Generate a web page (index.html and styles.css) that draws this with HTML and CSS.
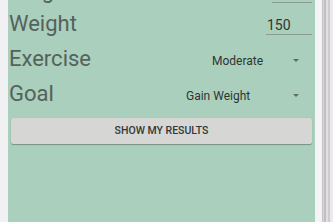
FILE: index.html
```html
<!DOCTYPE html>
<html lang="en">
<head>
<meta charset="utf-8">
<title>Calorie Form</title>
<link rel="stylesheet" href="styles.css">
</head>
<body>
<div class="screen">
  <div class="edge-left"></div>
  <main class="panel">
    <div class="form">
      <div class="row row-first">
        <span class="label">Height</span>
        <div class="field field-height">70</div>
      </div>
      <div class="row">
        <span class="label">Weight</span>
        <div class="field field-weight">150</div>
      </div>
      <div class="row">
        <span class="label">Exercise</span>
        <div class="spinner spinner-exercise"><span>Moderate</span><span class="caret"></span></div>
      </div>
      <div class="row">
        <span class="label">Goal</span>
        <div class="spinner spinner-goal"><span>Gain Weight</span><span class="caret"></span></div>
      </div>
    </div>
    <button class="submit" type="button">SHOW MY RESULTS</button>
  </main>
  <div class="edge-right"></div>
  <div class="scroll-track"></div>
</div>
</body>
</html>
```
FILE: styles.css
```css
html, body {
  margin: 0;
  padding: 0;
  height: 100%;
}
body {
  font-family: Roboto, "Noto Sans", sans-serif;
  background: #f1f1f3;
  overflow: hidden;
}
.screen {
  display: flex;
  height: 222px;
}
.edge-left {
  flex: none;
  width: 8px;
  background: #f1f1f3;
}
.panel {
  flex: none;
  width: 307px;
  box-sizing: border-box;
  padding: 0 3px 0 1px;
  background: #aacfbd;
  display: flex;
  flex-direction: column;
}
.form {
  display: flex;
  flex-direction: column;
  margin-top: -27px;
}
.row {
  flex: none;
  display: flex;
  align-items: flex-start;
  height: 35px;
}
.row-first {
  height: 32.5px;
}
.label {
  font-size: 22px;
  line-height: 35px;
  color: #55625c;
  white-space: nowrap;
}
.field {
  margin-left: auto;
  margin-top: 11.5px;
  box-sizing: border-box;
  padding-left: 1px;
  font-size: 14px;
  line-height: 17px;
  color: #2f3532;
  border-bottom: 1px solid #8c9c95;
}
.field-height {
  width: 40px;
}
.field-weight {
  width: 46px;
}
.spinner {
  margin-left: auto;
  margin-top: 13px;
  display: flex;
  align-items: center;
  font-size: 12px;
  line-height: 14px;
  color: #2f3532;
  white-space: nowrap;
}
.spinner-exercise {
  width: 100px;
}
.spinner-goal {
  width: 126px;
}
.caret {
  margin-left: auto;
  margin-right: 13px;
  margin-bottom: 1px;
  width: 0;
  height: 0;
  border-left: 3px solid transparent;
  border-right: 3px solid transparent;
  border-top: 3px solid #5d6b65;
}
.submit {
  margin: 7px 0 0 2px;
  height: 26px;
  padding: 0;
  border: none;
  border-radius: 2px;
  background: #d6d7d5;
  box-shadow: 0 1px 1px rgba(0, 0, 0, 0.28), 0 0 1px rgba(0, 0, 0, 0.15);
  font-family: Roboto, "Noto Sans", sans-serif;
  font-size: 10.5px;
  font-weight: 500;
  color: #333735;
}
.edge-right {
  flex: none;
  width: 7px;
  background: #f4f4f6;
}
.scroll-track {
  flex: none;
  width: 11px;
  background: linear-gradient(to right,
    #c6c1c6 0 1.5px,
    #dad6da 1.5px 2.5px,
    #c3bec3 2.5px 4px,
    #e2dfe2 4px 6px,
    #cfcbcf 6px 8px,
    #ebe9eb 8px 11px);
}
```
